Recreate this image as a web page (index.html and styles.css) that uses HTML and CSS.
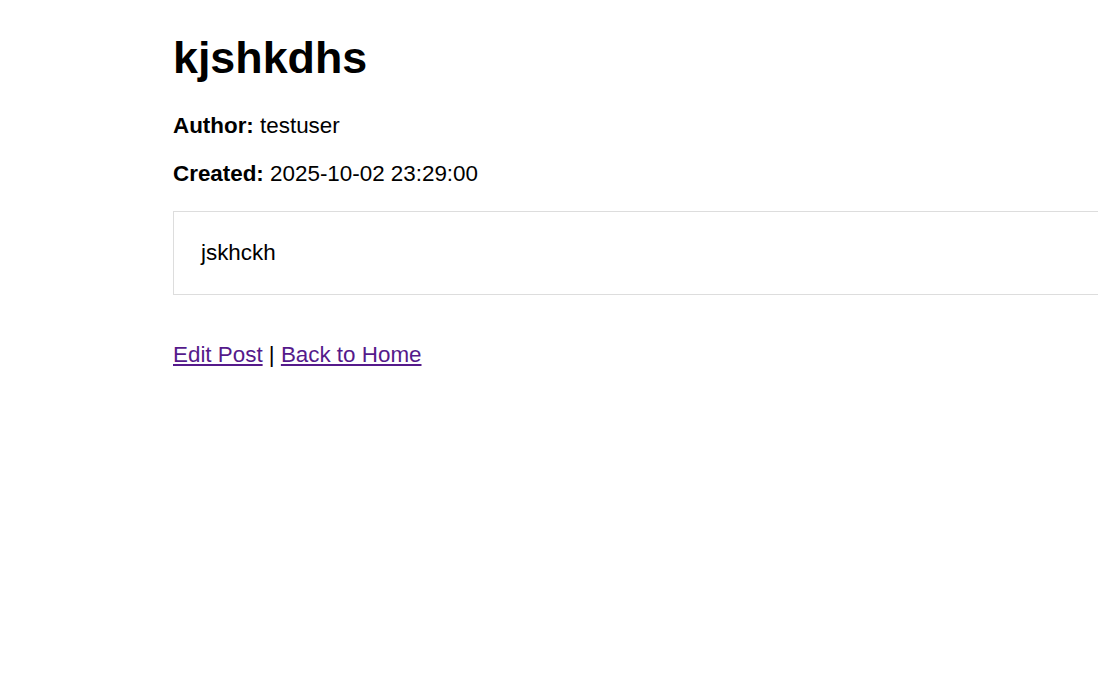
FILE: index.html
```html
<!DOCTYPE html>
<html lang="en">
<head>
<meta charset="utf-8">
<title>kjshkdhs</title>
<link rel="stylesheet" href="styles.css">
</head>
<body>
<main class="page">
  <h1 class="post-title">kjshkdhs</h1>
  <p class="meta"><strong>Author:</strong> testuser</p>
  <p class="meta"><strong>Created:</strong> 2025-10-02 23:29:00</p>
  <div class="post-body">jskhckh</div>
  <p class="actions"><a class="link" href="#edit">Edit Post</a> | <a class="link" href="#home">Back to Home</a></p>
</main>
</body>
</html>
```

FILE: styles.css
```css
html, body {
  margin: 0;
  padding: 0;
  background: #ffffff;
}

body {
  font-family: "Liberation Sans", Arial, sans-serif;
  font-size: 22.4px;
  color: #000000;
}

.page {
  padding: 2px 0 0 173px;
}

.post-title {
  font-size: 44.8px;
  font-weight: bold;
  margin: 30px 0 30px 0;
  line-height: normal;
}

.meta {
  margin: 22.4px 0;
}

.post-body {
  border: 1px solid #dddddd;
  border-right: none;
  padding: 28px 27px;
  margin: 24px 0 25px 0;
}

.actions {
  margin: 47px 0 22.4px 0;
}

.link {
  color: #551a8b;
  text-decoration: underline;
}
```
